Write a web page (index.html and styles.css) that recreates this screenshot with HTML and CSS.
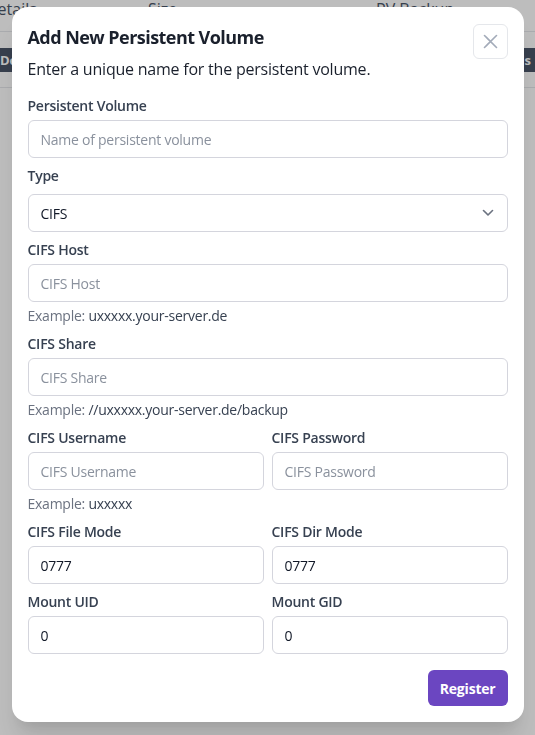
FILE: index.html
```html
<!DOCTYPE html>
<html lang="en">
<head>
<meta charset="utf-8">
<title>Add New Persistent Volume</title>
<link rel="stylesheet" href="styles.css">
</head>
<body>
<div class="page">
  <div class="thead">
    <span class="th th-details">Details</span>
    <span class="th th-size">Size</span>
    <span class="th th-backup">PV Backup</span>
  </div>
  <div class="trow">
    <span class="pill pill-left">Delete</span>
    <span class="pill pill-right">Details</span>
  </div>
</div>

<div class="overlay">
  <div class="modal">
    <div class="modal-head">
      <div class="head-text">
        <h2 class="title">Add New Persistent Volume</h2>
        <p class="subtitle">Enter a unique name for the persistent volume.</p>
      </div>
      <button class="close" type="button" aria-label="Close">
        <svg width="15" height="15" viewBox="0 0 15 15"><path d="M1.5 1.5 L13.5 13.5 M13.5 1.5 L1.5 13.5" stroke="#a3abb9" stroke-width="1.6" fill="none" stroke-linecap="round"/></svg>
      </button>
    </div>

    <form class="form">
      <div class="field">
        <label class="label">Persistent Volume</label>
        <input class="input" type="text" placeholder="Name of persistent volume">
      </div>
      <div class="field">
        <label class="label label-type">Type</label>
        <div class="select-wrap">
          <select class="input select"><option>CIFS</option></select>
          <svg class="chev" width="12" height="8" viewBox="0 0 12 8"><path d="M1.5 1.5 L6 6 L10.5 1.5" stroke="#6b7280" stroke-width="1.6" fill="none" stroke-linecap="round" stroke-linejoin="round"/></svg>
        </div>
      </div>
      <div class="field">
        <label class="label">CIFS Host</label>
        <input class="input" type="text" placeholder="CIFS Host">
        <p class="hint">Example: <span class="hint-val">uxxxxx.your-server.de</span></p>
      </div>
      <div class="field">
        <label class="label">CIFS Share</label>
        <input class="input" type="text" placeholder="CIFS Share">
        <p class="hint">Example: <span class="hint-val">//uxxxxx.your-server.de/backup</span></p>
      </div>
      <div class="pair">
        <div class="field">
          <label class="label">CIFS Username</label>
          <input class="input" type="text" placeholder="CIFS Username">
          <p class="hint">Example: <span class="hint-val">uxxxxx</span></p>
        </div>
        <div class="field">
          <label class="label">CIFS Password</label>
          <input class="input" type="password" placeholder="CIFS Password">
        </div>
      </div>
      <div class="pair">
        <div class="field">
          <label class="label">CIFS File Mode</label>
          <input class="input" type="text" value="0777">
        </div>
        <div class="field">
          <label class="label">CIFS Dir Mode</label>
          <input class="input" type="text" value="0777">
        </div>
      </div>
      <div class="pair">
        <div class="field">
          <label class="label">Mount UID</label>
          <input class="input" type="text" value="0">
        </div>
        <div class="field">
          <label class="label">Mount GID</label>
          <input class="input" type="text" value="0">
        </div>
      </div>
      <div class="actions">
        <button class="btn-primary" type="button">Register</button>
      </div>
    </form>
  </div>
</div>
</body>
</html>
```

FILE: styles.css
```css
* { box-sizing: border-box; }

html, body {
  margin: 0;
  padding: 0;
  height: 100%;
  overflow: hidden;
}

body {
  font-family: "Open Sans", "Noto Sans", sans-serif;
  background: #ffffff;
  color: #1f2937;
}

/* background page */
.page {
  margin-top: -14px;
}

.thead {
  display: grid;
  grid-template-columns: 162px 228px 1fr;
  height: 46px;
  align-items: center;
  border-bottom: 1px solid #e5e7eb;
  font-size: 16px;
  color: #4a5568;
  margin-left: -14px;
}

.trow {
  display: flex;
  justify-content: space-between;
  align-items: center;
  height: 56px;
  border-bottom: 1px solid #e5e7eb;
}

.pill {
  display: inline-block;
  height: 24px;
  line-height: 24px;
  padding: 0 10px;
  background: #4a5568;
  color: #ffffff;
  font-size: 13px;
  font-weight: 700;
  border-radius: 4px;
}

.pill-left { margin-left: -10px; }
.pill-right { margin-right: -6px; }

/* overlay + modal */
.overlay {
  position: fixed;
  inset: 0;
  background: rgba(0, 0, 0, 0.26);
  display: flex;
  justify-content: center;
  align-items: flex-start;
  padding-top: 7px;
}

.modal {
  width: 512px;
  background: #ffffff;
  border-radius: 16px;
  padding: 16px;
  box-shadow: 0 20px 25px -5px rgba(0, 0, 0, 0.12), 0 10px 10px -5px rgba(0, 0, 0, 0.05);
}

.modal-head {
  display: flex;
  justify-content: space-between;
  align-items: flex-start;
}

.title {
  margin: 0;
  font-size: 18px;
  line-height: 28px;
  font-weight: 700;
  letter-spacing: -0.55px;
  color: #1a202c;
}

.subtitle {
  margin: 6px 0 0;
  font-size: 16px;
  line-height: 24px;
  letter-spacing: -0.22px;
  color: #1a202c;
}

.close {
  width: 35px;
  height: 35px;
  margin-top: 1px;
  border: 1px solid #e5e7eb;
  border-radius: 6px;
  background: #ffffff;
  display: flex;
  align-items: center;
  justify-content: center;
  padding: 0;
}

.form {
  margin-top: 15px;
  display: flex;
  flex-direction: column;
  gap: 8px;
}

.field {
  display: flex;
  flex-direction: column;
  min-width: 0;
}

.label {
  font-size: 14px;
  line-height: 20px;
  font-weight: 600;
  letter-spacing: -0.25px;
  color: #374151;
  margin-bottom: 4px;
}

.label-type { margin-bottom: 8px; }

.input {
  width: 100%;
  height: 38px;
  border: 1px solid #d4d5dd;
  border-radius: 6px;
  padding: 0 12px;
  font-family: inherit;
  font-size: 14px;
  letter-spacing: -0.25px;
  color: #111827;
  background: #ffffff;
  outline: none;
}

.input::placeholder { color: #8a919d; }

.select-wrap { position: relative; }

.select {
  appearance: none;
  -webkit-appearance: none;
}

.chev {
  position: absolute;
  right: 14px;
  top: 15px;
  pointer-events: none;
}

.hint {
  margin: 4px 0 0;
  font-size: 14px;
  line-height: 20px;
  letter-spacing: -0.25px;
  color: #6b7280;
}

.hint-val { color: #374151; }

.pair {
  display: grid;
  grid-template-columns: 1fr 1fr;
  gap: 8px;
  align-items: start;
}

.actions {
  display: flex;
  justify-content: flex-end;
  margin-top: 8px;
}

.btn-primary {
  height: 36px;
  padding: 0 12px;
  border: none;
  border-radius: 6px;
  background: #6b46c1;
  color: #ffffff;
  font-family: inherit;
  font-size: 14px;
  font-weight: 700;
  letter-spacing: -0.2px;
}
```
